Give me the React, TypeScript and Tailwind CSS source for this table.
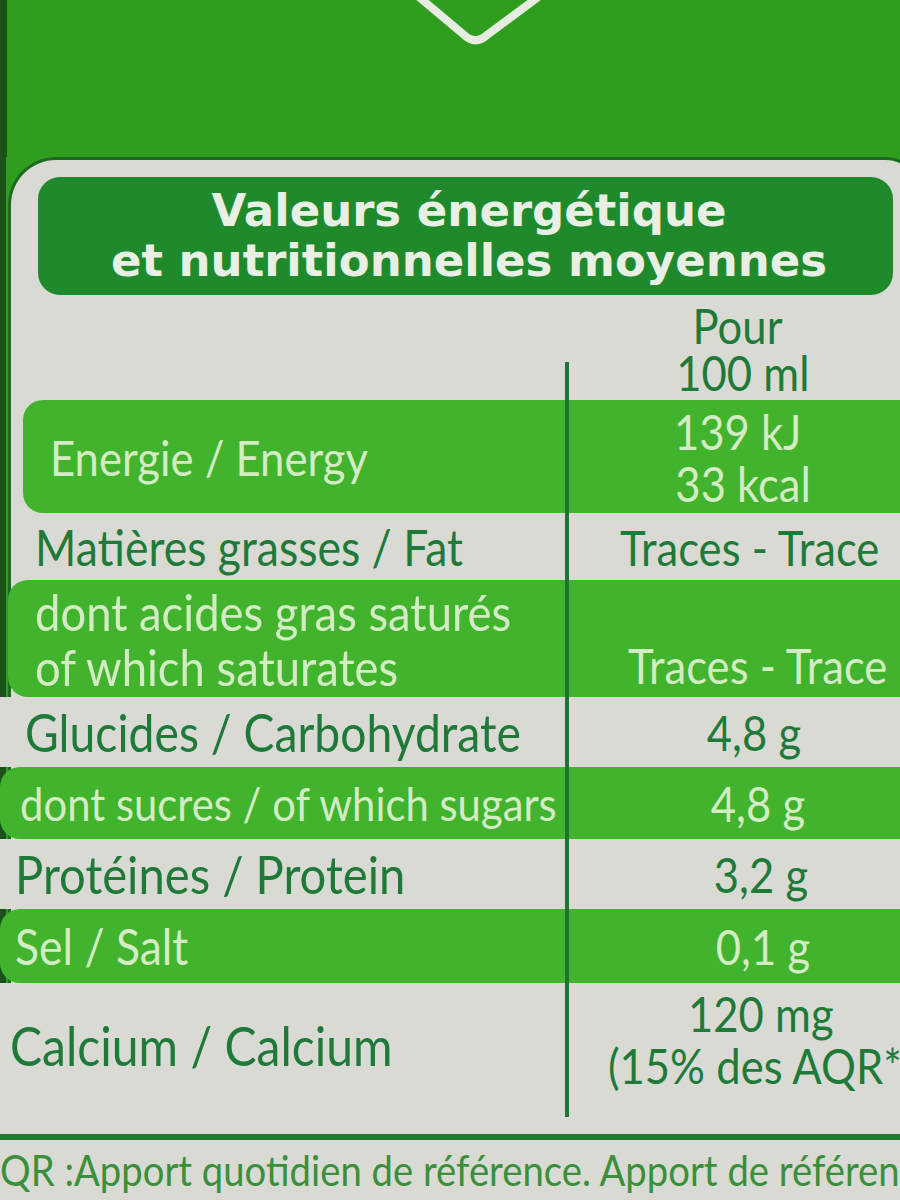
import React from 'react';

function L({ children }: { children: React.ReactNode }) {
  return <span className="inline-block origin-left scale-x-[0.89]">{children}</span>;
}

function V({ children }: { children: React.ReactNode }) {
  return <span className="inline-block origin-center scale-x-[0.89]">{children}</span>;
}

type RowProps = {
  rowCls: string;
  leftCls: string;
  left: React.ReactNode;
  right: React.ReactNode;
  rightCls?: string;
};

function Row({ rowCls, leftCls, left, right, rightCls }: RowProps) {
  return (
    <div className={`flex shrink-0 ${rowCls}`}>
      <div className={`flex flex-col justify-center shrink-0 whitespace-nowrap ${leftCls}`}>{left}</div>
      <div className="w-[4px] shrink-0 bg-[#1f7434]" />
      <div
        className={`flex-1 flex flex-col items-center whitespace-nowrap text-[49px] ${rightCls ?? 'justify-center'}`}
      >
        {right}
      </div>
    </div>
  );
}

export default function App() {
  const band = 'bg-[#41b32c] rounded-l-[20px] text-[#d3ecc4]';
  const plain = 'bg-[#d9dad4] text-[#1f7a3a]';
  return (
    <div className="w-[900px] h-[1200px] overflow-hidden bg-[#2f9e1f] flex flex-col font-['Lato',sans-serif] text-[49px] leading-[52px]">
      <div className="h-[157px] shrink-0 border-l-[7px] border-[#1a5217] flex">
        <svg className="ml-[402px] shrink-0" width="140" height="52" viewBox="0 0 140 52">
          <path
            d="M 4 -8 L 54 34 Q 66 46 78 35 L 136 -8"
            fill="none"
            stroke="#e6ede0"
            strokeWidth="8"
            strokeLinejoin="round"
          />
        </svg>
      </div>
      <div className="flex flex-1 min-h-0">
        <div className="w-[8px] shrink-0 border-l-[6px] border-[#1a5217]" />
        <div className="w-[912px] shrink-0 flex flex-col bg-[#d9dad4] border-[3px] border-b-0 border-[#1b6a1f] rounded-tl-[48px] rounded-tr-[34px]">
          <div className="mt-[17px] ml-[27px] mr-[24px] h-[118px] shrink-0 rounded-[22px] bg-[#1e8a2c] flex flex-col items-center justify-center pl-[7px] text-[#e8efe4] font-bold font-['DejaVu_Sans',sans-serif] text-[45px] leading-[50px]">
            <div>Valeurs énergétique</div>
            <div>et nutritionnelles moyennes</div>
          </div>

          <div className="flex h-[105px] shrink-0 text-[#1f7a3a]">
            <div className="w-[554px] shrink-0" />
            <div className="w-[4px] h-[38px] self-end shrink-0 bg-[#1f7434]" />
            <div className="flex-1 flex flex-col items-center justify-end pb-[4px] leading-[47px]">
              <div className="pr-[10px]">
                <V>Pour</V>
              </div>
              <div>
                <V>100 ml</V>
              </div>
            </div>
          </div>

          <Row
            rowCls={`h-[113px] ml-[12px] ${band}`}
            leftCls="w-[542px] pl-[27px] text-[49px]"
            left={
              <div>
                <L>Energie / Energy</L>
              </div>
            }
            right={
              <>
                <div className="pr-[10px]">
                  <V>139 kJ</V>
                </div>
                <div>
                  <V>33 kcal</V>
                </div>
              </>
            }
          />
          <Row
            rowCls={`h-[67px] ${plain}`}
            leftCls="w-[554px] pl-[24px] text-[50px]"
            left={
              <div>
                <L>Matières grasses / Fat</L>
              </div>
            }
            right={
              <div className="pl-[14px]">
                <V>Traces - Trace</V>
              </div>
            }
          />
          <Row
            rowCls={`h-[117px] -ml-[3px] ${band}`}
            leftCls="w-[557px] pl-[27px] text-[51px] leading-[55px]"
            left={
              <>
                <div>
                  <L>dont acides gras saturés</L>
                </div>
                <div>
                  <L>of which saturates</L>
                </div>
              </>
            }
            rightCls="justify-end pb-[6px]"
            right={
              <div className="pl-[30px]">
                <V>Traces - Trace</V>
              </div>
            }
          />
          <Row
            rowCls={`h-[70px] -ml-[11px] ${plain}`}
            leftCls="w-[565px] pl-[25px] text-[52px]"
            left={
              <div>
                <L>Glucides / Carbohydrate</L>
              </div>
            }
            right={
              <div className="pl-[22px]">
                <V>4,8 g</V>
              </div>
            }
          />
          <Row
            rowCls={`h-[72px] -ml-[11px] ${band}`}
            leftCls="w-[565px] pl-[20px] text-[47px]"
            left={
              <div>
                <L>dont sucres / of which sugars</L>
              </div>
            }
            right={
              <div className="pl-[30px]">
                <V>4,8 g</V>
              </div>
            }
          />
          <Row
            rowCls={`h-[70px] -ml-[11px] ${plain}`}
            leftCls="w-[565px] pl-[15px] text-[53px]"
            left={
              <div>
                <L>Protéines / Protein</L>
              </div>
            }
            right={
              <div className="pl-[36px]">
                <V>3,2 g</V>
              </div>
            }
          />
          <Row
            rowCls={`h-[74px] -ml-[11px] ${band}`}
            leftCls="w-[565px] pl-[15px] text-[50px]"
            left={
              <div>
                <L>Sel / Salt</L>
              </div>
            }
            right={
              <div className="pl-[40px]">
                <V>0,1 g</V>
              </div>
            }
          />
          <Row
            rowCls={`h-[112px] -ml-[11px] ${plain}`}
            leftCls="w-[565px] pl-[10px] pt-[14px] text-[54px]"
            left={
              <div>
                <L>Calcium / Calcium</L>
              </div>
            }
            right={
              <div className="pl-[20px] flex flex-col items-center">
                <div>
                  <V>120 mg</V>
                </div>
                <div>
                  <V>(15% des AQR*)</V>
                </div>
              </div>
            }
          />
          <div className="flex h-[22px] shrink-0 -ml-[11px] bg-[#d9dad4]">
            <div className="w-[565px] shrink-0" />
            <div className="w-[4px] shrink-0 bg-[#1f7434]" />
          </div>
          <div className="-ml-[11px] flex-1 flex flex-col bg-[#d9dad4] pt-[17px]">
            <div className="h-[6px] shrink-0 bg-[#1f7a2a]" />
            <div className="pt-[6px] whitespace-nowrap text-[43px] leading-[48px] text-[#3a8f3a]">
              <L>QR :Apport quotidien de référence. Apport de référence</L>
            </div>
          </div>
        </div>
      </div>
    </div>
  );
}
